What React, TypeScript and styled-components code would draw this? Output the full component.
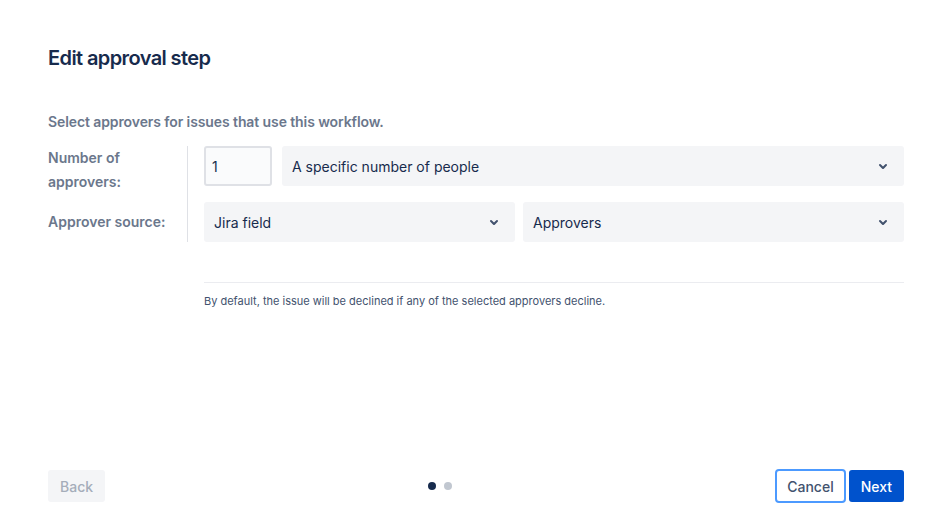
import React from 'react';
import styled, { createGlobalStyle } from 'styled-components';

const GlobalStyle = createGlobalStyle`
  html, body {
    margin: 0;
    padding: 0;
    background: #ffffff;
  }
  body {
    font-family: Inter, "Noto Sans", "Liberation Sans", sans-serif;
    color: #172b4d;
    -webkit-font-smoothing: antialiased;
  }
  * {
    box-sizing: border-box;
  }
`;

const Modal = styled.div`
  width: 952px;
  height: 522px;
  padding: 44px 48px 19px;
  display: flex;
  flex-direction: column;
`;

const Title = styled.h2`
  margin: 0;
  font-size: 20px;
  line-height: 28px;
  font-weight: 600;
  color: #172b4d;
  letter-spacing: -0.6px;
`;

const Intro = styled.p`
  margin: 40px 0 14px;
  font-size: 14px;
  line-height: 20px;
  font-weight: 600;
  color: #6b778c;
  letter-spacing: -0.1px;
`;

const Form = styled.div`
  display: flex;
  flex-direction: column;
`;

const Row = styled.div<{ $last?: boolean }>`
  display: flex;
  & > * {
    padding-bottom: ${p => (p.$last ? 0 : 8)}px;
  }
`;

const Label = styled.div`
  width: 140px;
  flex-shrink: 0;
  display: flex;
  align-items: center;
  min-height: 40px;
  padding-right: 16px;
  border-right: 1px solid #dfe1e6;
  font-size: 14px;
  line-height: 24px;
  font-weight: 600;
  color: #6b778c;
`;

const LabelText = styled.span`
  align-self: flex-start;
`;

const Fields = styled.div`
  flex: 1;
  display: flex;
  gap: 8px;
  padding-left: 16px;
`;

const NumberInput = styled.div`
  width: 68px;
  height: 40px;
  margin-right: 2px;
  flex-shrink: 0;
  display: flex;
  align-items: center;
  padding: 0 6px;
  background: #fafbfc;
  border: 2px solid #dfe1e6;
  border-radius: 3px;
  font-size: 14px;
  color: #172b4d;
`;

const Select = styled.div<{ $width?: number }>`
  ${p => (p.$width ? `width: ${p.$width}px; flex-shrink: 0;` : 'flex: 1;')}
  height: 40px;
  display: flex;
  align-items: center;
  justify-content: space-between;
  padding: 0 9px 0 10px;
  background: #f4f5f7;
  border-radius: 3px;
  font-size: 14px;
  color: #172b4d;
`;

const ChevronBox = styled.span`
  width: 24px;
  height: 24px;
  display: flex;
  color: #42526e;
`;

const Divider = styled.hr`
  margin: 40px 0 0 156px;
  border: none;
  border-top: 1px solid #ebecf0;
`;

const Note = styled.p`
  margin: 10px 0 0 156px;
  font-size: 11px;
  line-height: 16px;
  color: #42526e;
`;

const Footer = styled.div`
  margin-top: auto;
  display: flex;
  align-items: center;
  justify-content: space-between;
`;

const Button = styled.button<{ $variant?: 'primary' | 'subtle' | 'disabled'; $focused?: boolean }>`
  height: ${p => (p.$focused ? 34 : 32)}px;
  padding: 0 ${p => (p.$focused ? 10 : 12)}px;
  border: ${p => (p.$focused ? '2px solid #4c9aff' : 'none')};
  border-radius: ${p => (p.$focused ? 4 : 3)}px;
  font-family: inherit;
  font-size: 14px;
  font-weight: 500;
  cursor: pointer;
  background: ${p =>
    p.$variant === 'primary' ? '#0052cc' : p.$variant === 'disabled' ? '#f4f5f7' : '#ffffff'};
  color: ${p =>
    p.$variant === 'primary' ? '#ffffff' : p.$variant === 'disabled' ? '#a5adba' : '#42526e'};
`;

const ButtonGroup = styled.div`
  display: flex;
  align-items: center;
  gap: 3px;
`;

const Dots = styled.div`
  display: flex;
  gap: 8px;
`;

const Dot = styled.span<{ $active?: boolean }>`
  width: 8px;
  height: 8px;
  border-radius: 50%;
  background: ${p => (p.$active ? '#172b4d' : '#c1c7d0')};
`;

const Chevron = () => (
  <ChevronBox>
    <svg width="24" height="24" viewBox="0 0 24 24" aria-hidden="true">
      <path
        fill="currentColor"
        d="M8.292 10.293a1.009 1.009 0 0 0 0 1.419l2.939 2.965c.218.215.5.322.779.322s.556-.107.769-.322l2.93-2.955a1.01 1.01 0 0 0 0-1.419.987.987 0 0 0-1.406 0l-2.298 2.317-2.307-2.327a.99.99 0 0 0-1.406 0z"
      />
    </svg>
  </ChevronBox>
);

const App: React.FC = () => {
  return (
    <>
      <GlobalStyle />
      <Modal>
        <Title>Edit approval step</Title>
        <Intro>Select approvers for issues that use this workflow.</Intro>
        <Form>
          <Row>
            <Label>
              <LabelText>
                Number of
                <br />
                approvers:
              </LabelText>
            </Label>
            <Fields>
              <NumberInput>1</NumberInput>
              <Select>
                A specific number of people
                <Chevron />
              </Select>
            </Fields>
          </Row>
          <Row $last>
            <Label>Approver source:</Label>
            <Fields>
              <Select $width={311}>
                Jira field
                <Chevron />
              </Select>
              <Select>
                Approvers
                <Chevron />
              </Select>
            </Fields>
          </Row>
        </Form>
        <Divider />
        <Note>By default, the issue will be declined if any of the selected approvers decline.</Note>
        <Footer>
          <Button $variant="disabled">Back</Button>
          <Dots>
            <Dot $active />
            <Dot />
          </Dots>
          <ButtonGroup>
            <Button $variant="subtle" $focused>
              Cancel
            </Button>
            <Button $variant="primary">Next</Button>
          </ButtonGroup>
        </Footer>
      </Modal>
    </>
  );
};

export default App;
